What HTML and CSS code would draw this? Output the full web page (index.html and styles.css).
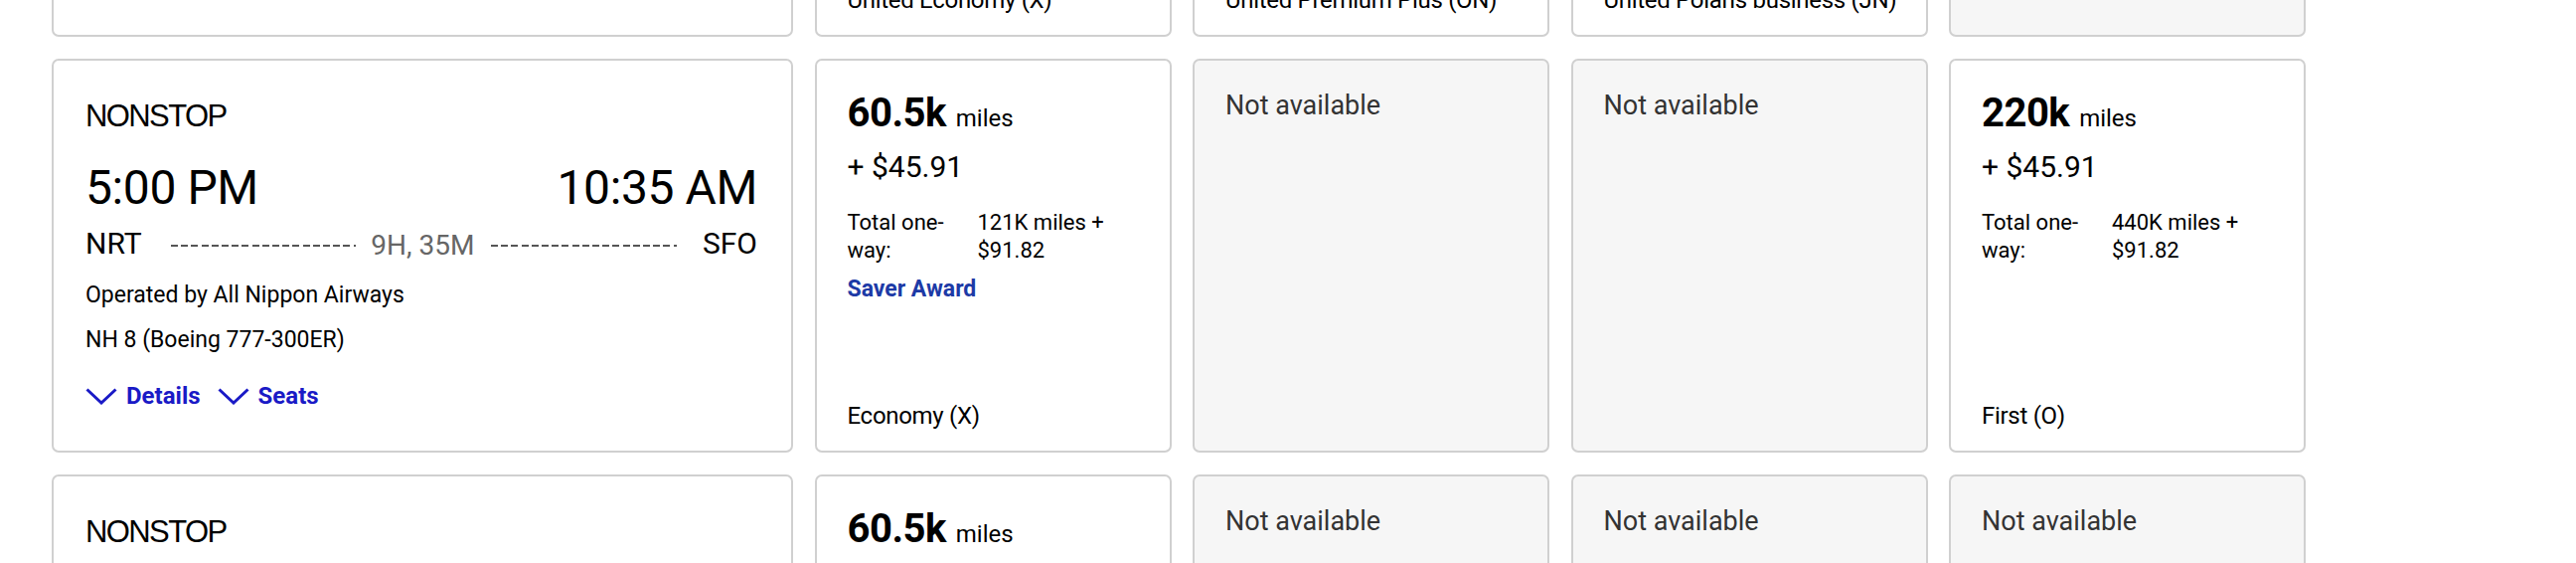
FILE: index.html
```html
<!DOCTYPE html>
<html lang="en">
<head>
<meta charset="utf-8">
<title>Award results</title>
<link rel="stylesheet" href="styles.css">
</head>
<body>
<div class="results">

  <div class="row">
    <div class="card flight">
      <div class="stops">NONSTOP</div>
      <div class="times"><span>4:50 PM</span><span>9:35 AM</span></div>
      <div class="route"><span class="ap">NRT</span><span class="dash"></span><span class="dur">9H, 45M</span><span class="dash"></span><span class="ap">SFO</span></div>
      <div class="op">Operated by United Airlines</div>
      <div class="op eq">UA 838 (Boeing 777-300ER)</div>
      <div class="links"><a class="lnk"><svg class="chev" viewBox="0 0 32 17"><path d="M1.5 1.5 L16 15 L30.5 1.5"/></svg>Details</a><a class="lnk"><svg class="chev" viewBox="0 0 32 17"><path d="M1.5 1.5 L16 15 L30.5 1.5"/></svg>Seats</a></div>
    </div>
    <div class="card fare">
      <div class="miles"><b>60.5k</b> <span>miles</span></div>
      <div class="price">+ $45.91</div>
      <div class="total"><span>Total one-way:</span><span>121K miles + $91.82</span></div>
      <div class="saver">Saver Award</div>
      <div class="cabin">United Economy (X)</div>
    </div>
    <div class="card fare">
      <div class="miles"><b>88k</b> <span>miles</span></div>
      <div class="price">+ $45.91</div>
      <div class="total"><span>Total one-way:</span><span>176K miles + $91.82</span></div>
      <div class="cabin">United Premium Plus (ON)</div>
    </div>
    <div class="card fare">
      <div class="miles"><b>110k</b> <span>miles</span></div>
      <div class="price">+ $45.91</div>
      <div class="total"><span>Total one-way:</span><span>220K miles + $91.82</span></div>
      <div class="cabin">United Polaris business (JN)</div>
    </div>
    <div class="card na"><div class="na-text">Not available</div></div>
  </div>

  <div class="row">
    <div class="card flight">
      <div class="stops">NONSTOP</div>
      <div class="times"><span>5:00 PM</span><span>10:35 AM</span></div>
      <div class="route"><span class="ap">NRT</span><span class="dash"></span><span class="dur">9H, 35M</span><span class="dash"></span><span class="ap">SFO</span></div>
      <div class="op">Operated by All Nippon Airways</div>
      <div class="op eq">NH 8 (Boeing 777-300ER)</div>
      <div class="links"><a class="lnk"><svg class="chev" viewBox="0 0 32 17"><path d="M1.5 1.5 L16 15 L30.5 1.5"/></svg>Details</a><a class="lnk"><svg class="chev" viewBox="0 0 32 17"><path d="M1.5 1.5 L16 15 L30.5 1.5"/></svg>Seats</a></div>
    </div>
    <div class="card fare">
      <div class="miles"><b>60.5k</b> <span>miles</span></div>
      <div class="price">+ $45.91</div>
      <div class="total"><span>Total one-way:</span><span>121K miles + $91.82</span></div>
      <div class="saver">Saver Award</div>
      <div class="cabin">Economy (X)</div>
    </div>
    <div class="card na"><div class="na-text">Not available</div></div>
    <div class="card na"><div class="na-text">Not available</div></div>
    <div class="card fare">
      <div class="miles"><b>220k</b> <span>miles</span></div>
      <div class="price">+ $45.91</div>
      <div class="total"><span>Total one-way:</span><span>440K miles + $91.82</span></div>
      <div class="cabin">First (O)</div>
    </div>
  </div>

  <div class="row">
    <div class="card flight">
      <div class="stops">NONSTOP</div>
      <div class="times"><span>6:40 PM</span><span>12:10 PM</span></div>
      <div class="route"><span class="ap">HND</span><span class="dash"></span><span class="dur">9H, 30M</span><span class="dash"></span><span class="ap">SFO</span></div>
      <div class="op">Operated by All Nippon Airways</div>
      <div class="op eq">NH 108 (Boeing 787-9)</div>
      <div class="links"><a class="lnk"><svg class="chev" viewBox="0 0 32 17"><path d="M1.5 1.5 L16 15 L30.5 1.5"/></svg>Details</a><a class="lnk"><svg class="chev" viewBox="0 0 32 17"><path d="M1.5 1.5 L16 15 L30.5 1.5"/></svg>Seats</a></div>
    </div>
    <div class="card fare">
      <div class="miles"><b>60.5k</b> <span>miles</span></div>
      <div class="price">+ $45.91</div>
      <div class="total"><span>Total one-way:</span><span>121K miles + $91.82</span></div>
      <div class="saver">Saver Award</div>
      <div class="cabin">Economy (X)</div>
    </div>
    <div class="card na"><div class="na-text">Not available</div></div>
    <div class="card na"><div class="na-text">Not available</div></div>
    <div class="card na"><div class="na-text">Not available</div></div>
  </div>

</div>
</body>
</html>
```

FILE: styles.css
```css
html, body {
  margin: 0;
  padding: 0;
  background: #ffffff;
}

body {
  font-family: Roboto, "Liberation Sans", Arial, sans-serif;
  color: #111111;
  overflow: hidden;
}

.results {
  display: flex;
  flex-direction: column;
  gap: 22px;
  padding-left: 52px;
  margin-top: -359px;
}

.row {
  display: grid;
  grid-template-columns: 746px repeat(4, 359px);
  column-gap: 21.5px;
}

.card {
  box-sizing: border-box;
  border: 2px solid #d0d0d0;
  border-radius: 7px;
  background: #ffffff;
  display: flex;
  flex-direction: column;
}

/* flight info card */
.flight {
  padding: 38px 34px 40px 32px;
}

.stops {
  font-family: "Liberation Sans", Arial, sans-serif;
  font-size: 31px;
  line-height: 36px;
  letter-spacing: -1.6px;
  color: #000;
}

.times {
  display: flex;
  justify-content: space-between;
  margin-top: 26px;
  font-size: 48px;
  line-height: 56px;
  letter-spacing: -0.4px;
  color: #000;
}

.route {
  display: flex;
  align-items: center;
  margin-top: 10px;
  height: 36px;
}

.ap {
  font-size: 30px;
  line-height: 36px;
  color: #000;
}

.dash {
  flex: 1;
  height: 2px;
  margin-top: 4px;
  background: repeating-linear-gradient(to right, #555 0 7px, transparent 7px 10.2px);
}

.route .ap:first-child + .dash { margin-left: 29px; margin-right: 15px; }
.route .dur + .dash { margin-left: 17px; margin-right: 26px; }

.dur {
  font-size: 28px;
  line-height: 36px;
  color: #666666;
  margin-top: 3px;
}

.op {
  margin-top: 19px;
  font-size: 23px;
  line-height: 30px;
  color: #000;
}

.op.eq {
  margin-top: 15px;
}

.links {
  display: flex;
  align-items: center;
  gap: 17px;
  margin-top: 26px;
  height: 30px;
}

.lnk {
  display: flex;
  align-items: center;
  gap: 9px;
  font-size: 24px;
  font-weight: 700;
  line-height: 30px;
  color: #1a1ac6;
}

.chev {
  width: 32px;
  height: 17px;
  fill: none;
  stroke: currentColor;
  stroke-width: 3;
}

/* fare card */
.fare {
  padding: 29px 32px 20px 31px;
}

.miles {
  font-size: 40px;
  line-height: 48px;
  color: #000;
}

.miles b {
  font-weight: 700;
  letter-spacing: -0.5px;
}

.miles span {
  font-size: 24px;
  line-height: 1;
}

.price {
  margin-top: 12px;
  font-size: 30px;
  line-height: 36px;
  color: #000;
}

.total {
  margin-top: 24px;
  display: grid;
  grid-template-columns: 115px 1fr;
  column-gap: 16px;
  font-size: 22px;
  line-height: 28px;
  color: #000;
}

.saver {
  margin-top: 11px;
  font-size: 23px;
  line-height: 28px;
  font-weight: 700;
  color: #1d3aa6;
}

.cabin {
  margin-top: auto;
  font-size: 24px;
  line-height: 30px;
  letter-spacing: -0.3px;
  white-space: nowrap;
  color: #000;
}

/* not available card */
.na {
  background: #f6f6f6;
  padding: 29px 32px 20px 31px;
}

.na-text {
  font-size: 27px;
  line-height: 32px;
  color: #333333;
}
```
